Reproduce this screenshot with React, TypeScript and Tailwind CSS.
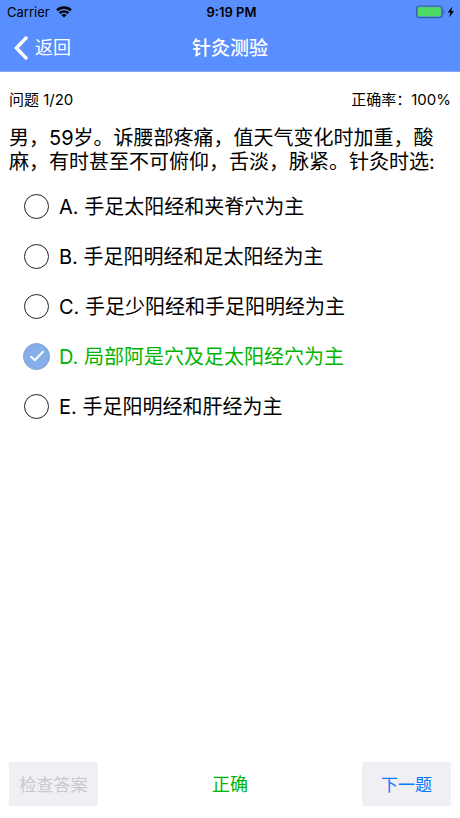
import { useState } from "react";

const options = [
  { key: "A", text: "手足太阳经和夹脊穴为主" },
  { key: "B", text: "手足阳明经和足太阳经为主" },
  { key: "C", text: "手足少阳经和手足阳明经为主" },
  { key: "D", text: "局部阿是穴及足太阳经穴为主" },
  { key: "E", text: "手足阳明经和肝经为主" },
];

const answer = "D";

function StatusBar() {
  return (
    <div className="grid h-6 grid-cols-3 items-center pl-[7px] pr-1 text-[13px] leading-6 text-black">
      <div className="flex items-center gap-1.5">
        <span>Carrier</span>
        {/* wifi */}
        <svg className="h-3 w-4" viewBox="0 0 16 12" fill="none" stroke="#000" strokeWidth="2.5">
          <path d="M1 4.4C5 0.5 11 0.5 15 4.4" />
          <path d="M3.6 7.2C6.1 4.8 9.9 4.8 12.4 7.2" />
          <path d="M8 11.5L5.4 9.1C7 7.7 9 7.7 10.6 9.1Z" fill="#000" stroke="none" />
        </svg>
      </div>
      <span className="text-center font-semibold">9:19 PM</span>
      {/* battery, charging */}
      <svg className="h-3.5 w-10 justify-self-end" viewBox="0 0 40 14">
        <rect x="0.6" y="1" width="25.6" height="11.6" rx="2.6" fill="#5890e0" stroke="#34609f" strokeWidth="1.2" />
        <rect x="2" y="2.3" width="22.8" height="9" rx="1.4" fill="#4cd964" />
        <path d="M27.4 4.8V8.8C28.8 8.4 28.8 5.2 27.4 4.8Z" fill="#34609f" />
        <path d="M36.2 1.4L31.8 7.6H34.4L33.2 12.4L38 6H35.3Z" fill="#000" />
      </svg>
    </div>
  );
}

function NavBar() {
  return (
    <div className="grid h-[47px] grid-cols-3 items-center px-3.5 text-white">
      <button className="flex items-center gap-[7px] justify-self-start text-lg">
        <svg className="h-6 w-3.5" viewBox="0 0 14 24" fill="none" stroke="#fff" strokeWidth="3.4">
          <path d="M12 2L2.4 12L12 22" strokeLinecap="round" strokeLinejoin="miter" />
        </svg>
        返回
      </button>
      <h1 className="pt-1 text-center text-[19px] font-medium">针灸测验</h1>
    </div>
  );
}

export default function App() {
  const [selected, setSelected] = useState(answer);

  return (
    <div className="flex min-h-screen flex-col bg-white font-['Inter','Noto_Sans_CJK_SC',sans-serif] text-black">
      <header className="border-b border-[#86a4ea] bg-[#598eff]">
        <StatusBar />
        <NavBar />
      </header>

      <main className="flex-1 px-[9px] pt-4">
        <div className="flex justify-between text-[15px] leading-6">
          <span>问题 1/20</span>
          <span>正确率：100%</span>
        </div>

        <p className="mt-3.5 text-xl leading-6">
          男，59岁。诉腰部疼痛，值天气变化时加重，酸麻，有时甚至不可俯仰，舌淡，脉紧。针灸时选:
        </p>

        <div className="mt-[7px]">
          {options.map((o) => (
            <label
              key={o.key}
              className={
                selected === o.key && o.key === answer
                  ? "flex h-[50px] items-center gap-[9px] pl-3.5 text-xl text-[#00b400]"
                  : "flex h-[50px] items-center gap-[9px] pl-3.5 text-xl"
              }
            >
              <span className="grid size-[27px] shrink-0 place-items-center">
                <input
                  type="radio"
                  name="answer"
                  checked={selected === o.key}
                  onChange={() => setSelected(o.key)}
                  className="col-start-1 row-start-1 size-[25px] appearance-none rounded-full border border-[#222] checked:size-[27px] checked:border-[#7da0d2] checked:bg-[#86aee9]"
                />
                {selected === o.key && (
                  <svg className="pointer-events-none col-start-1 row-start-1 h-3 w-4" viewBox="0 0 16 12" fill="none" stroke="#fff" strokeWidth="2">
                    <path d="M1.5 6.2L5.8 10.2L14.5 1.2" />
                  </svg>
                )}
              </span>
              <span className="pt-0.5">
                {o.key}. {o.text}
              </span>
            </label>
          ))}
        </div>
      </main>

      <footer className="grid grid-cols-3 items-center px-[9px] pb-3 text-[17px]">
        <button disabled className="h-11 w-[89px] justify-self-start rounded-xs bg-[#efeff4] pt-1 text-[#c8c8cd]">
          检查答案
        </button>
        <span className="pt-0.5 text-center text-lg text-[#00b400]">正确</span>
        <button className="h-11 w-[89px] justify-self-end rounded-xs bg-[#efeff4] pt-1 text-[#0a7aff]">下一题</button>
      </footer>
    </div>
  );
}
